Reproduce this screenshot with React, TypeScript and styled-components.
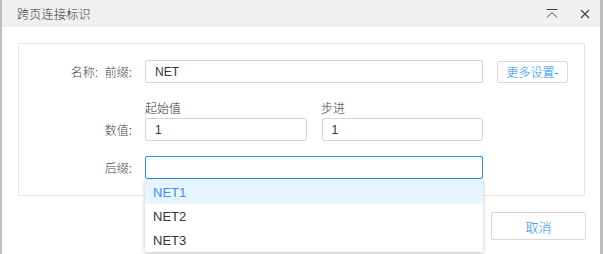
import React from "react";
import styled, { createGlobalStyle } from "styled-components";

const GlobalStyle = createGlobalStyle`
  html, body {
    margin: 0;
    padding: 0;
    background: #bdbdbd;
  }
  body {
    font-family: "Liberation Sans", "Noto Sans CJK SC", sans-serif;
    font-size: 12px;
    color: #333;
  }
`;

const Dialog = styled.div`
  margin: 0 3px 0 2px;
  height: 254px;
  background: #fff;
  display: flex;
  flex-direction: column;
`;

const TitleBar = styled.div`
  height: 27px;
  background: #f0f0f0;
  display: flex;
  align-items: center;
  padding: 0 10px 0 15px;
  font-size: 12px;
  color: #333;
`;

const Title = styled.div`
  flex: 1;
  letter-spacing: 0.3px;
  font-weight: 300;
`;

const TitleIcons = styled.div`
  display: flex;
  align-items: center;
  gap: 22px;
  color: #444;

  svg {
    display: block;
  }
`;

const Body = styled.div`
  padding: 16px 15px 0 16px;
`;

const Panel = styled.div`
  border: 1px solid #e6e6e6;
  padding: 16px 0 16px 0;
`;

const Row = styled.div<{ $gap?: number }>`
  display: flex;
  align-items: center;
  height: 23px;
  margin-bottom: ${(p) => p.$gap ?? 0}px;
`;

const CaptionRow = styled.div`
  display: flex;
  align-items: center;
  height: 16px;
  margin-bottom: 3px;
  padding-left: 126px;
  gap: 15px;
`;

const Caption = styled.div<{ $w: number }>`
  width: ${(p) => p.$w}px;
  color: #333;
  font-weight: 300;
`;

const OuterLabel = styled.div`
  width: 79px;
  text-align: right;
  color: #444;
  font-weight: 300;
`;

const InnerLabel = styled.div<{ $offset?: boolean }>`
  width: 34px;
  margin-left: ${(p) => (p.$offset ? 79 : 0)}px;
  margin-right: 13px;
  text-align: right;
  color: #444;
  font-weight: 300;
`;

const Fields = styled.div`
  position: relative;
  width: 338px;
  display: flex;
  gap: 15px;
`;

const Input = styled.div<{ $focused?: boolean }>`
  flex: 1;
  box-sizing: border-box;
  height: 23px;
  border: 1px solid ${(p) => (p.$focused ? "#1e90ff" : "#d5d5d5")};
  border-radius: 2px;
  padding-left: 9px;
  display: flex;
  align-items: center;
  color: #333;
`;

const MoreButton = styled.div`
  margin-left: 14px;
  box-sizing: border-box;
  width: 71px;
  height: 22px;
  border: 1px solid #d9d9d9;
  border-radius: 2px;
  display: flex;
  align-items: center;
  justify-content: center;
  color: #1890ff;
  font-weight: 300;
`;

const Dropdown = styled.div`
  position: absolute;
  top: 24px;
  left: 0;
  width: 338px;
  background: #fff;
  box-shadow: 0 1px 4px rgba(0, 0, 0, 0.25);
  z-index: 2;
`;

const Option = styled.div<{ $active?: boolean }>`
  height: 24px;
  padding-left: 8px;
  display: flex;
  align-items: center;
  font-size: 13px;
  color: ${(p) => (p.$active ? "#3d8ef8" : "#333")};
  background: ${(p) => (p.$active ? "#e6f5fd" : "#fff")};
`;

const Footer = styled.div`
  display: flex;
  justify-content: flex-end;
  padding-top: 16px;
  margin-right: -1px;
`;

const CancelButton = styled.div`
  box-sizing: border-box;
  width: 95px;
  height: 28px;
  border: 1px solid #d9d9d9;
  border-radius: 2px;
  display: flex;
  align-items: center;
  justify-content: center;
  color: #1890ff;
  font-size: 13px;
  font-weight: 300;
`;

function CollapseIcon() {
  return (
    <svg width="12" height="10" viewBox="0 0 12 10" fill="none" stroke="currentColor" strokeWidth="1">
      <path d="M0.5 0.5 H11.5" />
      <path d="M1 8.5 L6 3.5 L11 8.5" />
    </svg>
  );
}

function CloseIcon() {
  return (
    <svg width="10" height="10" viewBox="0 0 10 10" fill="none" stroke="currentColor" strokeWidth="1.2">
      <path d="M1 1 L9 9 M9 1 L1 9" />
    </svg>
  );
}

const options = ["NET1", "NET2", "NET3"];

export default function App() {
  return (
    <>
      <GlobalStyle />
      <Dialog>
        <TitleBar>
          <Title>跨页连接标识</Title>
          <TitleIcons>
            <CollapseIcon />
            <CloseIcon />
          </TitleIcons>
        </TitleBar>
        <Body>
          <Panel>
            <Row $gap={16}>
              <OuterLabel>名称:</OuterLabel>
              <InnerLabel>前缀:</InnerLabel>
              <Fields>
                <Input>NET</Input>
              </Fields>
              <MoreButton>更多设置-</MoreButton>
            </Row>
            <CaptionRow>
              <Caption $w={161}>起始值</Caption>
              <Caption $w={162}>步进</Caption>
            </CaptionRow>
            <Row $gap={15}>
              <InnerLabel $offset>数值:</InnerLabel>
              <Fields>
                <Input>1</Input>
                <Input>1</Input>
              </Fields>
            </Row>
            <Row>
              <InnerLabel $offset>后缀:</InnerLabel>
              <Fields>
                <Input $focused />
                <Dropdown>
                  {options.map((o, i) => (
                    <Option key={o} $active={i === 0}>
                      {o}
                    </Option>
                  ))}
                </Dropdown>
              </Fields>
            </Row>
          </Panel>
          <Footer>
            <CancelButton>取消</CancelButton>
          </Footer>
        </Body>
      </Dialog>
    </>
  );
}
